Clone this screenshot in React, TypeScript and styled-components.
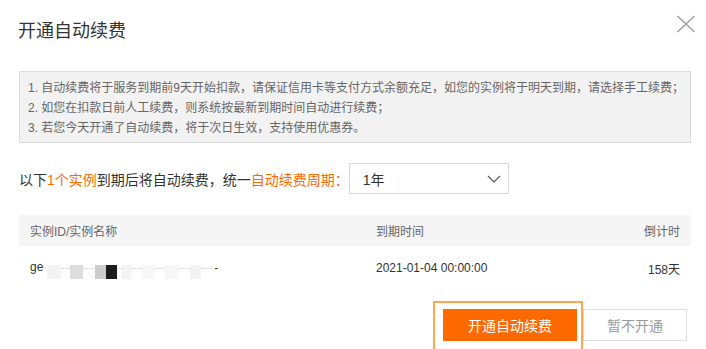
import React from 'react';
import styled, { createGlobalStyle } from 'styled-components';

const GlobalStyle = createGlobalStyle`
  html, body {
    margin: 0;
    padding: 0;
    background: #fff;
  }
  body {
    font-family: "Liberation Sans", "Noto Sans CJK SC", sans-serif;
    color: #333;
  }
`;

const orange = '#ff6a00';

const Dialog = styled.div`
  width: 706px;
  height: 349px;
  background: #fff;
  overflow: hidden;
  box-sizing: border-box;
`;

const Header = styled.div`
  display: flex;
  justify-content: space-between;
  align-items: flex-start;
  height: 71px;
  padding: 0 10px 0 18px;
  box-sizing: border-box;
`;

const Title = styled.h2`
  margin: 19px 0 0;
  font-size: 18px;
  font-weight: normal;
  line-height: 24px;
  color: #333;
`;

const CloseButton = styled.button`
  margin-top: 15px;
  padding: 0;
  border: none;
  background: none;
  cursor: pointer;
  line-height: 0;
`;

const Body = styled.div`
  padding: 0 15px 0 19px;
`;

const Notice = styled.ul`
  margin: 0;
  padding: 6px 8px;
  list-style: none;
  background: #f2f2f2;
  border: 1px solid #dcdcdc;
  font-size: 12px;
  line-height: 20px;
  white-space: nowrap;
  color: #666;
  box-sizing: border-box;
  height: 72px;
  overflow: hidden;
`;

const Instruction = styled.div`
  display: flex;
  align-items: center;
  margin-top: 20px;
  height: 31px;
  font-size: 14px;
  color: #333;
  white-space: nowrap;
`;

const Highlight = styled.span`
  color: ${orange};
`;

const Select = styled.div`
  display: flex;
  align-items: center;
  justify-content: space-between;
  width: 160px;
  height: 31px;
  padding: 0 7px 0 13px;
  border: 1px solid #d9d9d9;
  box-sizing: border-box;
  font-size: 14px;
  color: #333;
`;

const Table = styled.table`
  width: 100%;
  margin-top: 21px;
  border-collapse: collapse;
  font-size: 12px;
`;

const HeadCell = styled.th<{ $align?: string; $width?: number }>`
  height: 31px;
  padding: 0 11px;
  background: #f5f5f5;
  color: #666;
  font-weight: normal;
  text-align: ${(p) => p.$align || 'left'};
  width: ${(p) => (p.$width ? `${p.$width}px` : 'auto')};
  box-sizing: border-box;
`;

const Cell = styled.td<{ $align?: string }>`
  height: 44px;
  padding: 0 11px;
  color: #333;
  text-align: ${(p) => p.$align || 'left'};
`;

const Masked = styled.span`
  display: inline-flex;
  align-items: center;
  vertical-align: middle;
  position: relative;
  margin-left: 2px;
`;

const MaskLine = styled.span`
  position: absolute;
  left: 0;
  right: 6px;
  top: 50%;
  border-top: 1px dotted #cfcfcf;
`;

const MaskBlock = styled.span<{ $w: number; $gap: number; $c: string }>`
  position: relative;
  display: inline-block;
  width: ${(p) => p.$w}px;
  height: 14px;
  margin-left: ${(p) => p.$gap}px;
  margin-top: 8px;
  background: ${(p) => p.$c};
`;

const Dash = styled.span`
  margin-left: 13px;
`;

const Footer = styled.div`
  display: flex;
  justify-content: flex-end;
  gap: 6px;
  padding: 19px 19px 0 0;
`;

const PrimaryButton = styled.button`
  position: relative;
  width: 134px;
  height: 32px;
  border: none;
  background: ${orange};
  color: #fff;
  font-family: inherit;
  font-size: 14px;
  cursor: pointer;

  &::after {
    content: '';
    position: absolute;
    top: -8px;
    bottom: -10px;
    left: -10px;
    right: -6px;
    border: 2px solid #ffa552;
    pointer-events: none;
  }
`;

const SecondaryButton = styled.button`
  width: 104px;
  height: 32px;
  border: 1px solid #ddd;
  background: #fff;
  color: #999;
  font-family: inherit;
  font-size: 14px;
  cursor: pointer;
`;

const mask = [
  { w: 14, gap: 2, c: '#f3f3f3' },
  { w: 13, gap: 9, c: '#dddddd' },
  { w: 11, gap: 12, c: '#cccccc' },
  { w: 11, gap: 0, c: '#1c1c1c' },
  { w: 9, gap: 5, c: '#f3f3f3' },
  { w: 12, gap: 11, c: '#f6f6f6' },
  { w: 13, gap: 11, c: '#f6f6f6' },
  { w: 11, gap: 12, c: '#f3f3f3' },
];

const App: React.FC = () => {
  return (
    <>
      <GlobalStyle />
      <Dialog>
        <Header>
          <Title>开通自动续费</Title>
          <CloseButton aria-label="关闭">
            <svg width="20" height="18" viewBox="0 0 20 18">
              <path d="M1.5 1 L18.5 17 M18.5 1 L1.5 17" stroke="#999" strokeWidth="1.2" fill="none" />
            </svg>
          </CloseButton>
        </Header>
        <Body>
          <Notice>
            <li>1. 自动续费将于服务到期前9天开始扣款，请保证信用卡等支付方式余额充足，如您的实例将于明天到期，请选择手工续费；</li>
            <li>2. 如您在扣款日前人工续费，则系统按最新到期时间自动进行续费；</li>
            <li>3. 若您今天开通了自动续费，将于次日生效，支持使用优惠券。</li>
          </Notice>
          <Instruction>
            以下<Highlight>1个实例</Highlight>到期后将自动续费，统一<Highlight>自动续费周期：</Highlight>
            <Select>
              <span>1年</span>
              <svg width="14" height="8" viewBox="0 0 14 8">
                <path d="M1 1 L7 7 L13 1" stroke="#555" strokeWidth="1.2" fill="none" />
              </svg>
            </Select>
          </Instruction>
          <Table>
            <thead>
              <tr>
                <HeadCell $width={346}>实例ID/实例名称</HeadCell>
                <HeadCell>到期时间</HeadCell>
                <HeadCell $align="right">倒计时</HeadCell>
              </tr>
            </thead>
            <tbody>
              <tr>
                <Cell>
                  ge
                  <Masked>
                    <MaskLine />
                    {mask.map((m, i) => (
                      <MaskBlock key={i} $w={m.w} $gap={m.gap} $c={m.c} />
                    ))}
                    <Dash>-</Dash>
                  </Masked>
                </Cell>
                <Cell>2021-01-04 00:00:00</Cell>
                <Cell $align="right">158天</Cell>
              </tr>
            </tbody>
          </Table>
        </Body>
        <Footer>
          <PrimaryButton>开通自动续费</PrimaryButton>
          <SecondaryButton>暂不开通</SecondaryButton>
        </Footer>
      </Dialog>
    </>
  );
};

export default App;
